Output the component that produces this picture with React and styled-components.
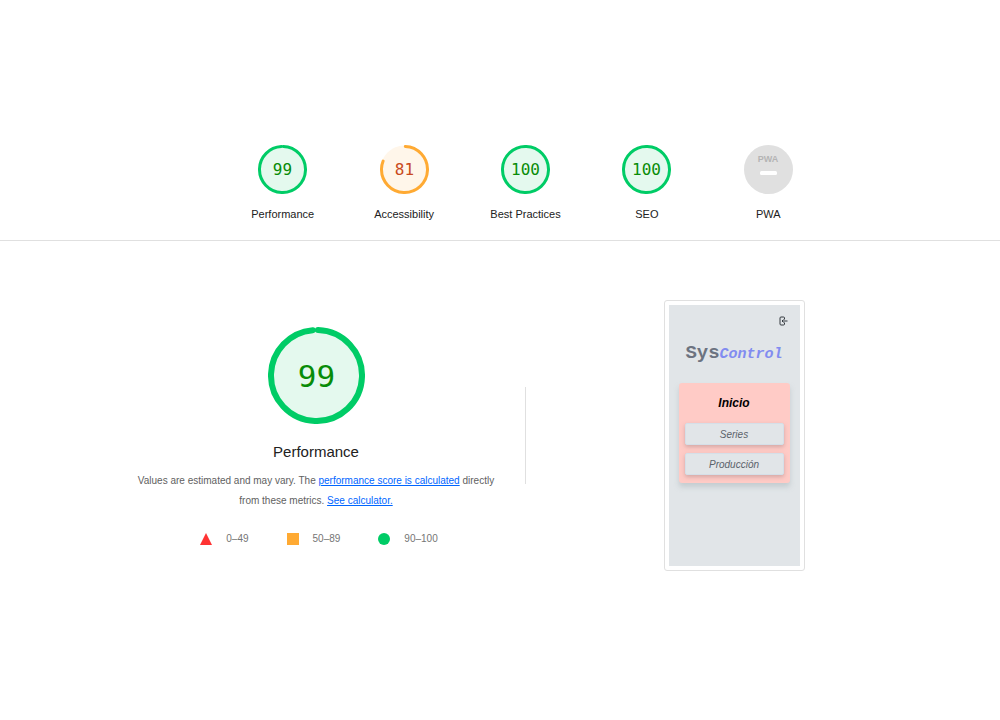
import React from "react";
import styled, { createGlobalStyle } from "styled-components";

const GlobalStyle = createGlobalStyle`
  * { box-sizing: border-box; }
  body { margin: 0; background: #fff; color: #212121; font: 11px/20px "Liberation Sans", Arial, sans-serif; }
  h1, h2, p, ul { margin: 0; padding: 0; font-weight: 400; }
`;

const tones = {
  pass: { line: "#00cc66", fill: "#e4f9ee", text: "#088c08" },
  average: { line: "#ffaa33", fill: "#fff6ea", text: "#c94a20" },
};

const ScoreHeader = styled.header`
  padding: 145px 0 16px 51px;
  border-bottom: 1px solid #e0e0e0;
`;

const ScoreList = styled.nav`
  display: grid;
  grid-template-columns: repeat(5, 1fr);
  max-width: 607px;
  margin: 0 auto;
`;

const ScoreLink = styled.a`
  display: flex;
  flex-direction: column;
  align-items: center;
  gap: 10px;
  color: #212121;
  text-decoration: none;
`;

const Dial = styled.svg`
  display: block;
  width: ${(p) => p.$size}px;
  height: ${(p) => p.$size}px;
`;

const DialText = styled.text`
  font-family: "DejaVu Sans Mono", monospace;
  font-size: ${(p) => p.$size}px;
  fill: ${(p) => p.$color};
  text-anchor: middle;
`;

const PwaText = styled.text`
  font: 700 9px "Liberation Sans", Arial, sans-serif;
  fill: #b4b4b4;
  text-anchor: middle;
`;

const Report = styled.main`
  padding: 59px 0 59px 50px;
`;

const Columns = styled.div`
  display: grid;
  grid-template-columns: 1fr 1px 1fr;
  align-items: center;
  max-width: 835px;
  margin: 0 auto;
`;

const Summary = styled.section`
  display: flex;
  flex-direction: column;
  align-items: center;
  padding-top: 4px;
`;

const Title = styled.h1`
  margin-top: 16px;
  font-size: 15px;
  line-height: 24px;
`;

const Description = styled.p`
  max-width: 370px;
  margin-top: 7px;
  color: #616161;
  font-size: 10px;
  text-align: center;
`;

const TextLink = styled.a`
  color: #0066ff;
  text-decoration: underline;
`;

const Legend = styled.ul`
  display: flex;
  gap: 38px;
  margin-top: 18px;
  padding-left: 6px;
  color: #757575;
  font-size: 10px;
  list-style: none;
`;

const LegendItem = styled.li`
  display: flex;
  align-items: center;
  gap: 14px;
`;

const Marker = styled.svg`
  width: 12px;
  height: 12px;
`;

const Divider = styled.div`
  height: 97px;
  background: #e0e0e0;
`;

const Frame = styled.figure`
  justify-self: center;
  width: 141px;
  margin: 0;
  padding: 4px;
  border: 1px solid #e0e0e0;
  border-radius: 3px;
`;

const Phone = styled.div`
  display: flex;
  flex-direction: column;
  min-height: 261px;
  padding: 11px 10px 0 10px;
  background: #e1e5e8;
`;

const ExitButton = styled.button`
  align-self: flex-end;
  display: flex;
  margin-right: 2px;
  padding: 0;
  border: 0;
  background: none;
  color: #343a40;
`;

const Brand = styled.h2`
  margin-top: 15px;
  color: #6c7380;
  font: 700 19px/24px "Liberation Mono", monospace;
  text-align: center;
  white-space: nowrap;
`;

const BrandAccent = styled.span`
  color: #818cf0;
  font-size: 15px;
  font-style: italic;
`;

const MenuCard = styled.div`
  display: flex;
  flex-direction: column;
  gap: 8px;
  margin-top: 16px;
  padding: 10px 6px 8px;
  border-radius: 3px;
  background: #ffcbc6;
  box-shadow: 0 4px 5px #a9b6ba80;
`;

const MenuTitle = styled.h2`
  margin-bottom: 2px;
  color: #000;
  font-size: 12px;
  font-style: italic;
  font-weight: 700;
  line-height: 20px;
  text-align: center;
`;

const MenuButton = styled.button`
  height: 22px;
  padding: 0;
  border: 1px solid #d5dfe8;
  border-radius: 2px;
  background: #e1e5e8;
  box-shadow: 0 2px 4px #a8868680;
  color: #5b626a;
  font: italic 10px "Liberation Sans", Arial, sans-serif;
`;

function Gauge({ score, tone = "pass", size = 49, stroke = 3, fontSize = 16 }) {
  const c = size / 2;
  const r = c - stroke / 2;
  const { line, fill, text } = tones[tone];
  const length = 2 * Math.PI * r;
  const arc = score < 100 ? (score / 100) * length - stroke / 2 : length;
  return (
    <Dial $size={size} viewBox={`0 0 ${size} ${size}`} role="img" aria-label={`${score}`}>
      <circle cx={c} cy={c} r={c - 0.5} fill={fill} />
      <circle
        cx={c} cy={c} r={r} fill="none" stroke={line} strokeWidth={stroke}
        strokeLinecap="round" strokeDasharray={`${arc} ${length}`}
        transform={`rotate(-88 ${c} ${c})`}
      />
      <DialText $size={fontSize} $color={text} x={c} y={c + fontSize * 0.36}>{score}</DialText>
    </Dial>
  );
}

const scores = [
  { label: "Performance", score: 99 },
  { label: "Accessibility", score: 81, tone: "average" },
  { label: "Best Practices", score: 100 },
  { label: "SEO", score: 100 },
];

export default function App() {
  return (
    <>
      <GlobalStyle />
      <ScoreHeader>
        <ScoreList aria-label="Scores">
          {scores.map((item) => (
            <ScoreLink key={item.label} href="#report">
              <Gauge score={item.score} tone={item.tone} />
              {item.label}
            </ScoreLink>
          ))}
          <ScoreLink href="#report">
            <Dial $size={49} viewBox="0 0 49 49" aria-hidden="true">
              <circle cx="24.5" cy="24.5" r="24.5" fill="#e0e0e0" />
              <PwaText x="24" y="17">PWA</PwaText>
              <rect x="16" y="26" width="17" height="4" rx="1.5" fill="#fff" />
            </Dial>
            PWA
          </ScoreLink>
        </ScoreList>
      </ScoreHeader>
      <Report id="report">
        <Columns>
          <Summary>
            <Gauge score={99} size={97} stroke={6} fontSize={31} />
            <Title>Performance</Title>
            <Description>
              Values are estimated and may vary. The{" "}
              <TextLink href="#score">performance score is calculated</TextLink> directly from
              these metrics. <TextLink href="#calculator">See calculator.</TextLink>
            </Description>
            <Legend>
              <LegendItem>
                <Marker viewBox="0 0 12 12"><path d="M6 0 12 12H0z" fill="#ff3333" /></Marker>
                0–49
              </LegendItem>
              <LegendItem>
                <Marker viewBox="0 0 12 12"><path d="M0 0h12v12H0z" fill="#ffaa33" /></Marker>
                50–89
              </LegendItem>
              <LegendItem>
                <Marker viewBox="0 0 12 12"><circle cx="6" cy="6" r="6" fill="#00cc66" /></Marker>
                90–100
              </LegendItem>
            </Legend>
          </Summary>
          <Divider />
          <Frame>
            <Phone>
              <ExitButton aria-label="Salir">
                <svg width="10" height="10" viewBox="0 0 10 10" fill="none" stroke="currentColor">
                  <path d="M6.5 3.500V2Q6.500 1 5.500 1H3Q2 1 2 2V8Q2 9 3 9H5.500Q6.500 9 6.500 8V6.500M9.500 5H4M5.500 3.500 4 5l1.500 1.500" />
                </svg>
              </ExitButton>
              <Brand>Sys<BrandAccent>Control</BrandAccent></Brand>
              <MenuCard>
                <MenuTitle>Inicio</MenuTitle>
                <MenuButton>Series</MenuButton>
                <MenuButton>Producción</MenuButton>
              </MenuCard>
            </Phone>
          </Frame>
        </Columns>
      </Report>
    </>
  );
}
